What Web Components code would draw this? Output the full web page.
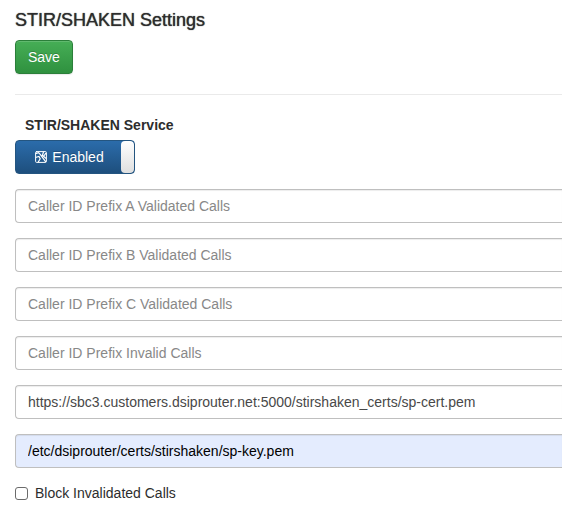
<!DOCTYPE html>
<html lang="en">
<head>
<meta charset="utf-8">
<meta name="viewport" content="width=device-width, initial-scale=1">
<title>STIR/SHAKEN Settings</title>
<style>
  body { margin: 0; background: #fff; color: #2d2d2d; font: 14px/20px "Liberation Sans", Arial, sans-serif; }
</style>
</head>
<body>
<settings-page></settings-page>
<script>
const define = (name, html, setup) => {
  const template = document.createElement('template');
  template.innerHTML = '<style>*{box-sizing:border-box}</style>' + html;
  customElements.define(name, class extends HTMLElement {
    constructor() {
      super();
      this.attachShadow({ mode: 'open' }).append(template.content.cloneNode(true));
    }
    connectedCallback() { if (setup) setup(this, this.shadowRoot); }
  });
};

define('save-button', `
  <style>
    :host { display: block; }
    button {
      display: block; height: 34px; padding: 0 12px; font: inherit; color: #fff; cursor: pointer;
      border: 1px solid #2b7f3a; border-radius: 4px;
      background: linear-gradient(#46ae56, #2f913f);
      box-shadow: inset 0 1px 0 rgba(255,255,255,.15), 0 1px 1px rgba(0,0,0,.08);
      text-shadow: 0 -1px 0 rgba(0,0,0,.2);
    }
  </style>
  <button type="button"><slot></slot></button>`);

define('toggle-switch', `
  <style>
    :host { display: block; width: 120px; }
    label {
      position: relative; display: flex; height: 34px; overflow: hidden; cursor: pointer;
      border: 1px solid #245580; border-radius: 4px; color: #fff;
      background: linear-gradient(#2b6cab, #1e4f7d);
      text-shadow: 0 -1px 0 rgba(0,0,0,.2);
    }
    input { position: absolute; inset: 0; width: 100%; height: 100%; margin: 0; opacity: 0; cursor: pointer; }
    .state { flex: 1; display: flex; align-items: center; justify-content: center; gap: 5px; padding-left: 2px; }
    .knob { width: 13px; border-radius: 4px; background: linear-gradient(#fff, #dfdfdf); }
    svg { display: block; width: 12px; height: 12px; }
  </style>
  <label>
    <input type="checkbox" role="switch" checked>
    <span class="state">
      <svg viewBox="0 0 12 12" fill="none" stroke="#fff" stroke-linecap="round" aria-hidden="true">
        <rect x=".6" y=".6" width="10.8" height="10.8" rx="1" stroke-width="1"/>
        <path d="M1.2 2.4 3.6 1.6 5.4 3.6 10.6 10.6M1.2 6.3 4 5.4 5.2 7.8 3.4 10.8M8.4 1.2 7.4 4.2l3.4 3M10.8 2.4 8.8 5" stroke-width="1.2"/>
      </svg>
      <span><slot></slot></span>
    </span>
    <span class="knob"></span>
  </label>`, (host, root) => {
    root.querySelector('input').setAttribute('aria-label', host.getAttribute('label'));
  });

define('text-field', `
  <style>
    :host { display: block; }
    input {
      display: block; width: 100%; height: 34px; padding: 6px 12px; margin: 0;
      font: inherit; color: #484848; background: #fff; outline: 0;
      border: 1px solid #bfbfbf; border-right: 0; border-radius: 4px 0 0 4px;
      box-shadow: inset 0 1px 1px rgba(0,0,0,.075);
    }
    input::placeholder { color: #888; opacity: 1; }
    :host([filled]) input { color: #000; background: #e4ecfe; }
  </style>
  <input type="text">`, (host, root) => {
    const input = root.querySelector('input');
    input.placeholder = host.getAttribute('placeholder') || '';
    input.value = host.getAttribute('value') || '';
    input.setAttribute('aria-label', host.getAttribute('label') || input.placeholder);
  });

define('check-field', `
  <style>
    :host { display: block; }
    label { display: flex; align-items: center; gap: 7px; cursor: pointer; }
    input {
      appearance: none; width: 13px; height: 13px; margin: 0;
      border: 1px solid #6b6b6b; border-radius: 3px; background: #fff;
    }
    input:checked { background: #2b6cab; }
  </style>
  <label><input type="checkbox"><span><slot></slot></span></label>`);

define('settings-page', `
  <style>
    :host { display: block; padding: 10px 0 20px 15px; }
    h1 { margin: 0 0 10px; font-size: 18px; line-height: 20px; font-weight: 400; text-shadow: 0 0 1px #2d2d2d; }
    hr { margin: 20px 0; border: 0; border-top: 1px solid #eaeaea; }
    h2 { margin: 0 0 5px; padding-left: 10px; font-size: 14px; line-height: 20px; font-weight: 700; }
    .fields { display: grid; gap: 15px; margin-top: 15px; }
  </style>
  <h1>STIR/SHAKEN Settings</h1>
  <save-button>Save</save-button>
  <hr>
  <h2>STIR/SHAKEN Service</h2>
  <toggle-switch label="STIR/SHAKEN Service">Enabled</toggle-switch>
  <div class="fields">
    <text-field placeholder="Caller ID Prefix A Validated Calls"></text-field>
    <text-field placeholder="Caller ID Prefix B Validated Calls"></text-field>
    <text-field placeholder="Caller ID Prefix C Validated Calls"></text-field>
    <text-field placeholder="Caller ID Prefix Invalid Calls"></text-field>
    <text-field label="Certificate URL" value="https://sbc3.customers.dsiprouter.net:5000/stirshaken_certs/sp-cert.pem"></text-field>
    <text-field filled label="Private key path" value="/etc/dsiprouter/certs/stirshaken/sp-key.pem"></text-field>
    <check-field>Block Invalidated Calls</check-field>
  </div>`);
</script>
</body>
</html>
